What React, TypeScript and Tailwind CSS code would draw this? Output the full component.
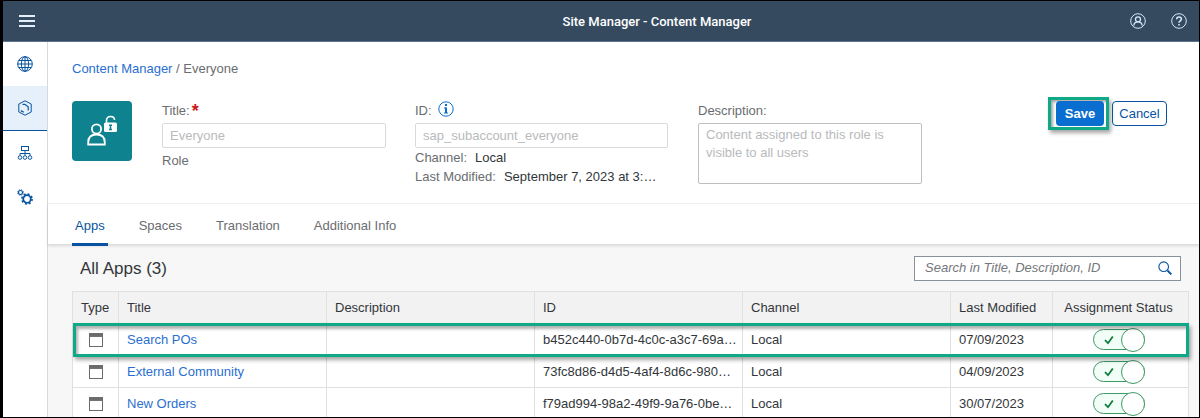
import type { ReactNode } from "react";

type App = { title: string; id: string; channel: string; modified: string; highlighted?: boolean };

const apps: App[] = [
  { title: "Search POs", id: "b452c440-0b7d-4c0c-a3c7-69a…", channel: "Local", modified: "07/09/2023", highlighted: true },
  { title: "External Community", id: "73fc8d86-d4d5-4af4-8d6c-980…", channel: "Local", modified: "04/09/2023" },
  { title: "New Orders", id: "f79ad994-98a2-49f9-9a76-0be…", channel: "Local", modified: "30/07/2023" },
];

const tabs = ["Apps", "Spaces", "Translation", "Additional Info"];

function Icon({ children, className = "size-4" }: { children: ReactNode; className?: string }) {
  return (
    <svg viewBox="0 0 16 16" className={className} fill="none" stroke="currentColor" strokeWidth="1" aria-hidden="true">
      {children}
    </svg>
  );
}

function GlobeIcon() {
  return (
    <Icon>
      <circle cx="8" cy="8" r="7.3" />
      <ellipse cx="8" cy="8" rx="3.6" ry="7.3" />
      <path d="M8 .7v14.6M.7 8h14.6M2 4.500h12M2 11.500h12" />
    </Icon>
  );
}

function ContentIcon() {
  return (
    <Icon>
      <path strokeLinejoin="round" d="M8 .8 14.200 4v8L8 15.200 1.800 12V4z" />
      <path strokeWidth="1.200" d="M5.500 4.300h2.300l3.400 2.500v3.700M3.800 10.600l3 1.600" />
    </Icon>
  );
}

function HierarchyIcon() {
  return (
    <Icon>
      <rect x="4.500" y="1.500" width="7" height="4" />
      <path d="M8 5.500v5M3 10.500V8.500h10v2" />
      <circle cx="3" cy="12.500" r="1.800" />
      <circle cx="8" cy="12.500" r="1.800" />
      <circle cx="13" cy="12.500" r="1.800" />
    </Icon>
  );
}

function GearsIcon() {
  return (
    <Icon>
      <circle cx="3.500" cy="3.500" r="2" strokeWidth="1.200" />
      <circle cx="3.500" cy="3.500" r="2.800" strokeWidth="1" strokeDasharray="1.100 1.100" />
      <circle cx="10" cy="10" r="3.800" strokeWidth="1.800" />
      <circle cx="10" cy="10" r="5.100" strokeWidth="1.600" strokeDasharray="2 2" />
    </Icon>
  );
}

function RoleIcon() {
  return (
    <svg viewBox="0 0 32 32" className="size-8" fill="none" stroke="white" strokeWidth="1.800" aria-hidden="true">
      <circle cx="10.500" cy="14" r="4.600" />
      <path d="M2.200 29.500v-2c0-5 3-8 8.300-8s8.300 3 8.300 8v2z" />
      <path d="M20.500 10V5.500c0-2.500 1.600-4 4-4s4 1.500 4 3.500" strokeWidth="1.600" />
      <rect x="18" y="7.500" width="13" height="9.500" rx="1.500" fill="white" stroke="none" />
      <path d="M24.500 9.500v5.500M23 10.300h3M23 14.500h3" stroke="#0f828f" strokeWidth="1.500" />
    </svg>
  );
}

const navItems = [
  { label: "Sites", icon: <GlobeIcon /> },
  { label: "Content Manager", icon: <ContentIcon />, active: true },
  { label: "Channel Manager", icon: <HierarchyIcon /> },
  { label: "Settings", icon: <GearsIcon /> },
];

function Switch({ label }: { label: string }) {
  return (
    <label className="group relative mx-auto flex h-6 w-[52px] items-center">
      <input type="checkbox" role="switch" aria-label={label} defaultChecked className="peer sr-only" />
      <span className="flex h-[21px] w-full items-center rounded-full border border-[#3d9a66] bg-[#f1fdf6] pl-2.5 text-[#107e3e]">
        <svg viewBox="0 0 10 10" className="size-2.5 opacity-0 group-has-checked:opacity-100" fill="none" stroke="currentColor" strokeWidth="1.800" aria-hidden="true">
          <path d="M1 5.200 4 8.200 8.800 1.500" />
        </svg>
      </span>
      <span className="absolute left-0 size-6 rounded-full border border-[#3d9a66] bg-white peer-checked:right-0 peer-checked:left-auto" />
    </label>
  );
}

const th = "border border-[#e0e0e0] px-2 text-left font-normal";
const td = "border border-[#e0e0e0] px-2 whitespace-nowrap";

export default function App() {
  return (
    <div className="flex h-screen flex-col overflow-hidden border-y border-r border-l-3 border-black bg-white font-['Liberation_Sans',Arial,sans-serif] text-[13px] leading-[18px] text-[#32363a]">
      <header className="flex h-[41px] shrink-0 items-center border-b border-[#5b7591] bg-[#354a5f] pr-3 pl-4 text-white">
        <div className="flex flex-1">
          <button type="button" aria-label="Menu" className="text-[#e3eefa]">
            <Icon>
              <path strokeWidth="2" d="M0 3h16M0 8h16M0 13h16" />
            </Icon>
          </button>
        </div>
        <h1 className="pt-px pl-[108px] font-['Roboto',sans-serif] font-medium">Site Manager - Content Manager</h1>
        <div className="flex flex-1 justify-end gap-[25px] text-[#d1e8ff]">
          <button type="button" aria-label="Profile">
            <Icon>
              <circle cx="8" cy="8" r="7.300" />
              <circle cx="8" cy="6.300" r="2.500" strokeWidth="1.300" />
              <path strokeWidth="1.300" d="M3.800 12.500c.3-2.400 1.800-3.600 4.200-3.600s3.900 1.200 4.200 3.600" />
            </Icon>
          </button>
          <button type="button" aria-label="Help">
            <Icon>
              <circle cx="8" cy="8" r="7.300" />
              <path strokeWidth="1.600" d="M5.700 6.200C5.700 4.700 6.600 4 8 4s2.400.8 2.400 2.100C10.400 7.800 8 7.800 8 9.700M8 10.900v1.500" />
            </Icon>
          </button>
        </div>
      </header>

      <div className="flex min-h-0 flex-1">
        <nav className="w-[45px] shrink-0 border-r border-[#d9d9d9]">
          {navItems.map((item) => (
            <a
              key={item.label}
              href="#"
              aria-label={item.label}
              className={
                item.active
                  ? "flex h-[45px] items-center justify-center border-b border-[#0854a0] bg-[#e5f0fa] text-[#0854a0]"
                  : "flex h-11 items-center justify-center text-[#0854a0]"
              }
            >
              {item.icon}
            </a>
          ))}
        </nav>

        <main className="flex min-w-0 flex-1 flex-col">
          <section className="h-[162px] shrink-0 border-b border-[#f4f4f4] pt-[18px] pr-8 pl-6">
            <p className="text-[#6a6d70]">
              <a href="#" className="text-[#2a6fd0]">Content Manager</a> / Everyone
            </p>
            <div className="mt-[23px] flex items-start">
              <div className="flex size-[60px] shrink-0 items-center justify-center rounded-sm bg-[#0f828f]">
                <RoleIcon />
              </div>
              <div className="ml-[30px] w-56">
                <label htmlFor="title" className="flex h-[22px] items-center gap-0.5 pb-0.5 text-[#6a6d70]">
                  Title: <span className="text-lg font-bold text-[#cc1919]">*</span>
                </label>
                <input id="title" disabled placeholder="Everyone" className="h-[25px] w-full rounded-xs border border-[#d9d9d9] px-[7px] placeholder:text-[#b8babc]" />
                <p className="mt-1 text-[#6a6d70]">Role</p>
              </div>
              <div className="ml-[29px] w-[253px] text-[#6a6d70]">
                <div className="flex h-[22px] items-center gap-1.5 pb-0.5">
                  <label htmlFor="role-id">ID:</label>
                  <button type="button" aria-label="About ID" className="-mt-1 text-[#0a6ed1]">
                    <Icon>
                      <circle cx="8" cy="8" r="7.200" />
                      <path strokeWidth="2" d="M8 3v2M8 6.500v5.500" />
                      <path strokeWidth="1.200" d="M6 7h2M6 12h4" />
                    </Icon>
                  </button>
                </div>
                <input id="role-id" disabled placeholder="sap_subaccount_everyone" className="h-[25px] w-full rounded-xs border border-[#d9d9d9] px-[7px] placeholder:text-[#b8babc]" />
                <p className="mt-px flex gap-2">
                  Channel: <span className="text-[#32363a]">Local</span>
                </p>
                <p className="mt-px flex gap-2 whitespace-nowrap">
                  Last Modified: <span className="text-[#32363a]">September 7, 2023 at 3:…</span>
                </p>
              </div>
              <div className="ml-[30px] w-56">
                <label htmlFor="description" className="flex h-[22px] items-center pb-0.5 text-[#6a6d70]">Description:</label>
                <textarea
                  id="description"
                  disabled
                  placeholder="Content assigned to this role is visible to all users"
                  className="block h-[61px] w-full resize-none rounded-xs border border-[#bfbfbf] px-[7px] py-0.5 placeholder:text-[#b8babc]"
                />
              </div>
              <div className="-mt-1 ml-auto flex items-center gap-[3px]">
                <div className="border-3 border-[#0fa986] py-px pr-0.5 pl-[5px] shadow-[2px_3px_4px_rgba(0,0,0,0.35),inset_2px_2px_3px_rgba(0,0,0,0.35)]">
                  <button type="button" className="block h-[25px] w-12 rounded-sm bg-[#0a6ed1] font-bold text-white">Save</button>
                </div>
                <button type="button" className="h-[25px] w-[55px] rounded-sm border border-[#0854a0] text-[#0854a0]">Cancel</button>
              </div>
            </div>
          </section>

          <div role="tablist" className="relative flex h-[41px] shrink-0 gap-7 border-b border-[#dedede] pl-6 shadow-[0_1px_3px_rgba(0,0,0,0.12)]">
            {tabs.map((tab, i) => (
              <button
                key={tab}
                type="button"
                role="tab"
                aria-selected={i === 0}
                className={
                  i === 0
                    ? "-mb-0.5 border-b-3 border-[#0854a0] px-[3px] pt-1 text-[#0854a0]"
                    : "-mb-0.5 border-b-3 border-transparent px-[3px] pt-1 text-[#6a6d70]"
                }
              >
                {tab}
              </button>
            ))}
          </div>

          <section className="min-h-0 flex-1 bg-[#f7f7f7] pr-2.5 pl-6">
            <div className="flex h-[46px] items-center justify-between pr-2 pl-2">
              <h2 className="pt-px text-[17px]">All Apps (3)</h2>
              <label className="flex h-[25px] w-[267px] items-center border border-[#89919a] bg-white pr-2 pl-2.5">
                <input
                  type="search"
                  aria-label="Search apps"
                  placeholder="Search in Title, Description, ID"
                  className="min-w-0 flex-1 italic outline-none placeholder:text-[#74777a]"
                />
                <Icon className="size-3.5 text-[#0854a0]">
                  <circle cx="6.500" cy="6.500" r="5.500" strokeWidth="1.300" />
                  <path strokeWidth="2.200" d="m10.800 10.800 4.500 4.500" />
                </Icon>
              </label>
            </div>
            <table className="w-full table-fixed border-collapse bg-white">
              <colgroup>
                <col className="w-[46px]" />
                <col />
                <col />
                <col />
                <col />
                <col className="w-[102px]" />
                <col className="w-[136px]" />
              </colgroup>
              <thead>
                <tr className="h-8 bg-[#f2f2f2]">
                  <th className={th}>Type</th>
                  <th className={th}>Title</th>
                  <th className={th}>Description</th>
                  <th className={th}>ID</th>
                  <th className={th}>Channel</th>
                  <th className="border border-[#e0e0e0] pl-2 text-left font-normal whitespace-nowrap">Last Modified</th>
                  <th className="border border-[#e0e0e0] pr-1 text-center font-normal">Assignment Status</th>
                </tr>
              </thead>
              <tbody>
                {apps.map((app) => (
                  <tr key={app.id} className="relative h-8">
                    <td className={td}>
                      <svg viewBox="0 0 14 14" className="mx-auto size-3.5 text-[#6a6d70]" fill="none" stroke="currentColor" role="img" aria-label="App">
                        <rect x=".5" y=".5" width="13" height="13" />
                        <path strokeWidth="3.500" d="M0 2.200h14" />
                      </svg>
                    </td>
                    <td className={td}>
                      <a href="#" className="text-[#2a6fd0]">{app.title}</a>
                    </td>
                    <td className={td} />
                    <td className={td}>{app.id}</td>
                    <td className={td}>{app.channel}</td>
                    <td className={td}>{app.modified}</td>
                    <td className="border border-[#e0e0e0] pr-1">
                      {app.highlighted && (
                        <span className="pointer-events-none absolute -inset-y-px inset-x-0 z-10 border-3 border-[#0fa986] shadow-[2px_3px_4px_rgba(0,0,0,0.35),inset_2px_3px_3px_rgba(0,0,0,0.3)]" />
                      )}
                      <Switch label={`Assignment status of ${app.title}`} />
                    </td>
                  </tr>
                ))}
              </tbody>
            </table>
          </section>
        </main>
      </div>
    </div>
  );
}
